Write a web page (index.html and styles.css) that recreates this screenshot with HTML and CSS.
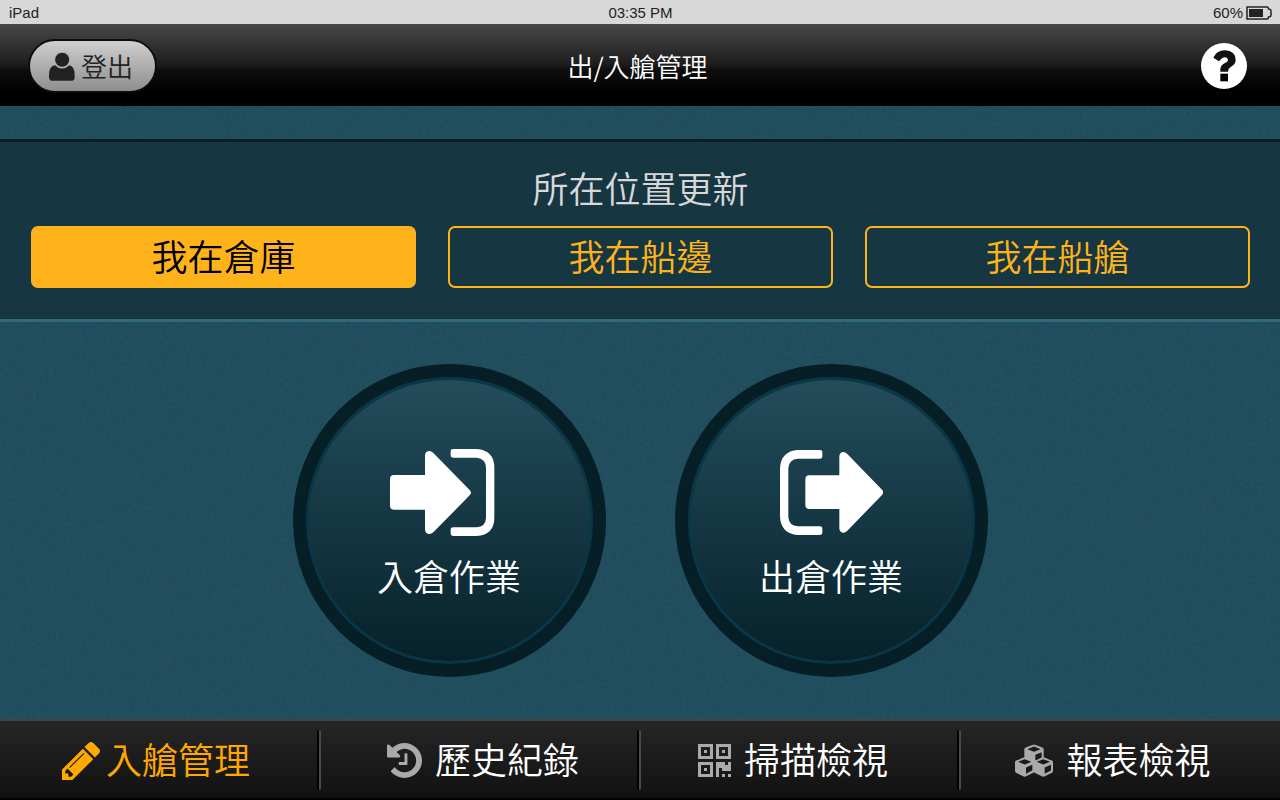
FILE: index.html
```html
<!DOCTYPE html>
<html lang="zh-Hant">
<head>
<meta charset="utf-8">
<meta name="viewport" content="width=device-width, initial-scale=1">
<title>出/入艙管理</title>
<link rel="stylesheet" href="styles.css">
</head>
<body>
<div class="status">
  <span>iPad</span>
  <span>03:35 PM</span>
  <span class="status-power">60%
    <svg class="battery" viewBox="0 0 26 14" aria-hidden="true">
      <path d="M1 1H21.5Q22.5 1 22.5 3Q25 3 25 5V9Q25 11 22.5 11Q22.5 13 21.5 13H1Z" fill="none" stroke="#222" stroke-width="1.5"/>
      <rect x="3" y="3" width="14" height="8" fill="#222"/>
    </svg>
  </span>
</div>

<header class="topbar">
  <button class="logout" type="button">
    <svg class="icon-user" viewBox="147 153 79 87" aria-hidden="true">
      <path d="M168 193H205Q225 193 225 223V229Q225 240 214 240H159Q147 240 147 229V223Q147 193 168 193Z" fill="#222"/>
      <circle cx="187" cy="176" r="24" fill="#222" stroke="#b4b4b4" stroke-width="5"/>
    </svg>
    登出
  </button>
  <h1 class="title">出/入艙管理</h1>
  <button class="help" type="button" aria-label="說明">
    <svg class="icon-help" viewBox="122 128 138 138" aria-hidden="true">
      <circle cx="191" cy="197" r="69" fill="#fff"/>
      <path d="M159 172Q169 150 194 150Q226 152 226 179Q226 192 211 200Q203 205 203 214H180V207Q180 195 194 188Q204 183 203 178Q201 171 193 171Q186 171 176 183Z" fill="#111"/>
      <rect x="180" y="220" width="23" height="23" fill="#000"/>
    </svg>
  </button>
</header>

<main class="main">
  <svg class="texture" aria-hidden="true">
    <filter id="grain" x="0" y="0" width="100%" height="100%" color-interpolation-filters="sRGB">
      <feTurbulence type="fractalNoise" baseFrequency="0.3" numOctaves="2" seed="4"/>
      <feColorMatrix values="0 0 0 0 0.15  0 0 0 0 0.26  0 0 0 0 0.32  1.6 0 0 0 -0.4"/>
    </filter>
    <rect width="100%" height="100%" filter="url(#grain)"/>
  </svg>

  <section class="location" aria-labelledby="location-title">
    <h2 class="location-title" id="location-title">所在位置更新</h2>
    <div class="location-options">
      <button class="option option-active" type="button" aria-pressed="true">我在倉庫</button>
      <button class="option" type="button" aria-pressed="false">我在船邊</button>
      <button class="option" type="button" aria-pressed="false">我在船艙</button>
    </div>
  </section>

  <section class="actions">
    <button class="action" type="button">
      <svg class="icon-in" viewBox="328 294 357 261" aria-hidden="true">
        <path fill="#fff" d="M340 372H433V312Q435 300 446 300Q452 300 458 306L567 417Q575 425 567 433L458 544Q452 549 446 549Q435 549 433 537V476H340Q328 476 328 464V384Q328 372 340 372Z"/>
        <path fill="#fff" d="M518 294H588Q641 298 641 350V500Q641 551 588 555H518Q510 555 510 547V536Q510 529 518 529H588Q615 527 616 500V350Q615 323 588 320H518Q510 320 510 312V301Q510 294 518 294Z"/>
      </svg>
      入倉作業
    </button>
    <button class="action" type="button">
      <svg class="icon-out" viewBox="327 57 309 261" aria-hidden="true">
        <path fill="#fff" d="M415 136H505V78Q507 66 517 66Q523 66 529 72L633 179Q640 187 633 195L529 302Q523 308 517 308Q507 308 505 296V237H415Q403 237 403 225V148Q403 136 415 136Z"/>
        <path fill="#fff" d="M446 60H380Q330 64 327 114V261Q330 311 380 315H446Q454 315 454 307V296Q454 289 446 289H380Q354 287 352 261V114Q354 88 380 86H446Q454 86 454 78V67Q454 60 446 60Z"/>
      </svg>
      出倉作業
    </button>
  </section>
</main>

<nav class="tabs">
  <a class="tab tab-active" href="#manage" aria-current="page">
    <svg class="icon-pencil" viewBox="0 21 1515 1515" aria-hidden="true"><path fill="currentColor" d="M363 1408l91-91-235-235-91 91v107h128v128h107zm523-928q0-22-22-22-10 0-17 7l-542 542q-7 7-7 17 0 22 22 22 10 0 17-7l542-542q7-7 7-17zm-54-192l416 416-832 832h-416v-416zm683 96q0 53-37 90l-166 166-416-416 166-165q36-38 90-38 53 0 91 38l235 234q37 39 37 91z"/></svg>
    <span class="tab-label">入艙管理</span>
  </a>
  <a class="tab tab-history" href="#history">
    <svg class="icon-history" viewBox="0 128 1536 1536" aria-hidden="true"><path fill="#aaa" d="M1536 896q0 156-61 298t-164 245-245 164-298 61q-172 0-327-72.500t-264-204.500q-7-10-6.500-22.500t8.500-20.500l137-138q10-9 25-9 16 2 23 12 73 95 179 147t225 52q104 0 198.500-40.500t163.500-109.500 109.500-163.500 40.500-198.500-40.500-198.500-109.500-163.500-163.500-109.500-198.500-40.500q-98 0-188 35.500t-160 101.500l137 138q31 30 14 69-17 40-59 40h-448q-26 0-45-19t-19-45v-448q0-42 40-59 39-17 69 14l130 129q107-101 244.500-156.500t284.500-55.500q156 0 298 61t245 164 164 245 61 298zm-640-288v448q0 14-9 23t-23 9h-320q-14 0-23-9t-9-23v-64q0-14 9-23t23-9h224v-352q0-14 9-23t23-9h64q14 0 23 9t9 23z"/></svg>
    <span class="tab-label">歷史紀錄</span>
  </a>
  <a class="tab tab-tail" href="#scan">
    <svg class="icon-qr" viewBox="0 0 11 11" aria-hidden="true"><path fill="#aaa" fill-rule="evenodd" d="M0 0H5V5H0ZM1 1V4H4V1ZM2 2H3V3H2ZM6 0H11V5H6ZM7 1V4H10V1ZM8 2H9V3H8ZM0 6H5V11H0ZM1 7V10H4V7ZM2 8H3V9H2ZM6 6H9V7H10V6H11V9H8V8H7V11H6ZM8 10H9V11H8ZM10 10H11V11H10Z"/></svg>
    <span class="tab-label">掃描檢視</span>
  </a>
  <a class="tab tab-tail" href="#report">
    <svg class="icon-cubes" viewBox="105 134 114 98" aria-hidden="true">
      <defs>
        <g id="cube">
          <path fill="#aaa" d="M0 -29Q2 -29 26 -19Q29 -17 29 -14V12Q29 16 26 18L3 29Q0 30 -3 29L-26 18Q-29 16 -29 12V-14Q-29 -17 -26 -19Q-2 -29 0 -29Z"/>
          <path fill="#1a1a1a" d="M0 -23L20 -15L0 -7L-20 -15ZM4 2L23 -6V11L4 21Z"/>
        </g>
      </defs>
      <use href="#cube" x="162" y="164"/>
      <use href="#cube" x="134" y="202"/>
      <use href="#cube" x="190" y="202"/>
    </svg>
    <span class="tab-label">報表檢視</span>
  </a>
</nav>
</body>
</html>
```

FILE: styles.css
```css
* { box-sizing: border-box; }

body {
  margin: 0;
  min-height: 100vh;
  display: flex;
  flex-direction: column;
  background: #205262;
  font-family: "Noto Sans CJK TC", sans-serif;
  font-weight: 350;
  color: #fff;
}

button {
  font: inherit;
  color: inherit;
  padding: 0;
  border: 0;
  background: none;
  cursor: pointer;
}

svg { display: block; flex: none; }

h1, h2 { margin: 0; font-weight: 350; }

.status {
  display: grid;
  grid-template-columns: 1fr auto 1fr;
  align-items: center;
  height: 24px;
  padding: 2px 8px 0 9px;
  background: #d8d8d8;
  color: #222;
  font: 400 15px/22px "Liberation Sans", Arial, sans-serif;
}

.status-power {
  display: flex;
  align-items: center;
  justify-content: flex-end;
  gap: 3px;
}

.battery { width: 26px; height: 14px; }

.topbar {
  display: grid;
  grid-template-columns: 1fr auto 1fr;
  align-items: center;
  height: 82px;
  padding: 2px 33px 0 28px;
  background: linear-gradient(#484848, #1e1e1e 48%, #0e0e0e 56%, #000 85%);
}

.logout {
  justify-self: start;
  display: flex;
  align-items: center;
  gap: 6px;
  height: 54px;
  padding: 0 22px 0 19px;
  border: 2px solid #0c0c0c;
  border-radius: 27px;
  background: linear-gradient(#cfcfcf, #8e8e8e);
  color: #222;
  font-size: 26px;
  line-height: 36px;
}

.icon-user { width: 26px; height: 29px; }

.title { font-size: 26px; line-height: 36px; }

.help { justify-self: end; border-radius: 50%; }

.icon-help { width: 46px; height: 46px; }

.main {
  position: relative;
  flex: 1;
  display: flex;
  flex-direction: column;
  padding-top: 33px;
}

.texture {
  position: absolute;
  inset: 0;
  width: 100%;
  height: 100%;
  opacity: 0.6;
}

.location {
  position: relative;
  padding: 22px 30px 31px 31px;
  border-top: 3px solid #061e26;
  border-bottom: 3px solid #31697b;
  background: #163641;
}

.location-title {
  margin-bottom: 16px;
  color: #d8d8d8;
  font-size: 36px;
  line-height: 46px;
  text-align: center;
}

.location-options {
  display: grid;
  grid-template-columns: repeat(3, 1fr);
  gap: 32px;
}

.option {
  height: 62px;
  padding-bottom: 5px;
  border: 2px solid #ffb31a;
  border-radius: 7px;
  color: #ffb31a;
  font-size: 36px;
  line-height: 52px;
}

.option-active { background: #ffb31a; color: #000; }

.actions {
  position: relative;
  flex: 1;
  display: flex;
  align-items: center;
  justify-content: center;
  gap: 69px;
}

.action {
  display: flex;
  flex-direction: column;
  align-items: center;
  justify-content: center;
  gap: 13px;
  width: 313px;
  height: 313px;
  padding-top: 8px;
  border: 13px solid #061e26;
  border-radius: 50%;
  background: linear-gradient(#244d5c, #06212a);
  box-shadow: inset 0 0 0 3px #0a3748;
  font-size: 36px;
  line-height: 52px;
}

.icon-in { width: 119px; height: 87px; }

.icon-out { width: 103px; height: 87px; }

.tabs {
  display: grid;
  grid-template-columns: repeat(4, 1fr);
  height: 81px;
  border-top: 2px solid #444;
  border-bottom: 2px solid #000;
  background: linear-gradient(#262626, #111);
}

.tab {
  position: relative;
  display: flex;
  align-items: center;
  justify-content: center;
  gap: 13px;
  padding-top: 2px;
  color: #fff;
  font-size: 36px;
  line-height: 52px;
  text-decoration: none;
}

.tab-label { padding-bottom: 5px; }

.tab-active { gap: 6px; padding-right: 8px; color: #ffa800; }

.tab-history { padding-left: 6px; }

.tab-tail { padding-right: 14px; }

.tab:not(:last-child)::after {
  content: "";
  position: absolute;
  top: 9px;
  right: -1px;
  width: 4px;
  height: 60px;
  border-radius: 2px;
  background: linear-gradient(90deg, #000 50%, #4a4a4a 50%);
}

.icon-pencil { width: 38px; height: 38px; }

.icon-history { width: 35px; height: 35px; }

.icon-qr { width: 33px; height: 33px; }

.icon-cubes { width: 38px; height: 33px; }
```
